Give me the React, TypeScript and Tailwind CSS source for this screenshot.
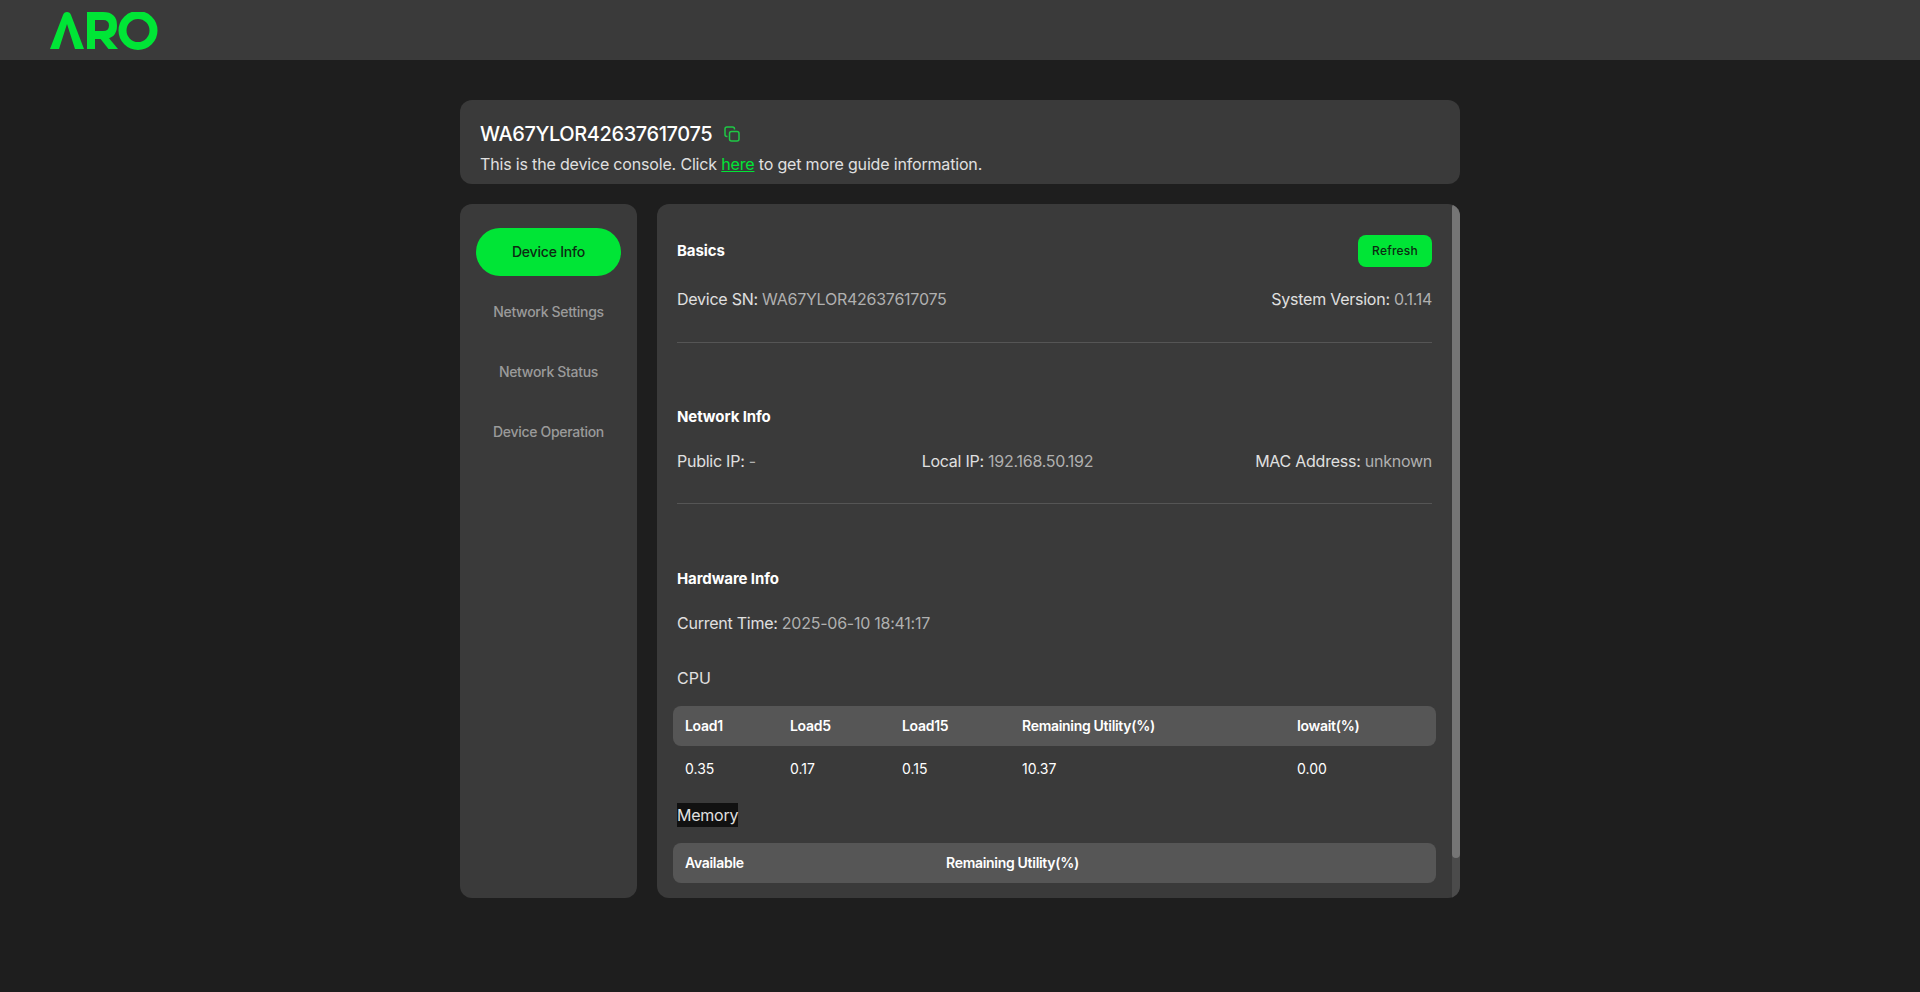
import React from 'react'

const font = { fontFamily: 'Inter, "Liberation Sans", sans-serif' }

const Logo = () => (
  <svg width="110" height="38" viewBox="0 0 110 38" fill="#00e536">
    <path d="M0 37 L13 3 Q14 0 17 0 Q20 0 21 3 L34 37 H25 L17 12 L9 37 Z" />
    <rect x="37" y="0" width="8" height="37" />
    <path d="M41 4 H53 Q63 4 63 13.5 Q63 23 53 23 H45" fill="none" stroke="#00e536" strokeWidth="8" />
    <path d="M49 25 H58 L68 37 H58.5 Z" />
    <circle cx="88" cy="18.5" r="15.5" fill="none" stroke="#00e536" strokeWidth="8" />
  </svg>
)

const CopyIcon = () => (
  <svg width="16" height="16" viewBox="0 0 16 16" fill="none" stroke="#1fc845" strokeWidth="1.5">
    <rect x="5.5" y="5.5" width="9.5" height="9.5" rx="2" />
    <path d="M3.5 10.5 H3 Q1 10.5 1 8.5 V3 Q1 1 3 1 H8.5 Q10.5 1 10.5 3 V3.5" />
  </svg>
)

const navItems = ['Device Info', 'Network Settings', 'Network Status', 'Device Operation']

const Field = ({ label, value }: { label: string; value: string }) => (
  <div className="text-[16px] leading-6 tracking-[-0.25px] text-[#e0e0e0]">
    {label}: <span className="text-[#b0b0b0]">{value}</span>
  </div>
)

const cpuCols = 'grid-cols-[105px_112px_120px_275px_1fr]'
const memCols = 'grid-cols-[261px_1fr]'

export default function App() {
  return (
    <div className="min-h-screen bg-[#1e1e1e]" style={font}>
      <header className="h-[60px] bg-[#3a3a3a] pl-[50px] pt-3">
        <Logo />
      </header>

      <main className="mx-auto mt-10 w-[1000px]">
        <section className="h-[84px] rounded-xl bg-[#3a3a3a] px-5 pt-5">
          <div className="flex items-center gap-3">
            <h1 className="text-[20px] leading-7 font-medium tracking-[-0.4px] text-white">WA67YLOR42637617075</h1>
            <CopyIcon />
          </div>
          <p className="mt-[4px] text-[16px] leading-6 tracking-[-0.17px] text-[#e0e0e0]">
            This is the device console. Click{' '}
            <a className="text-[#00e536] underline">here</a> to get more guide information.
          </p>
        </section>

        <div className="mt-5 flex h-[694px] gap-5">
          <nav className="flex w-[177px] flex-col gap-3 rounded-xl bg-[#3a3a3a] px-4 pt-6">
            {navItems.map((item, index) => (
              <div
                key={item}
                className={
                  index === 0
                    ? 'flex h-12 items-center justify-center rounded-full bg-[#00e536] pb-0.5 text-[14px] font-medium tracking-[-0.2px] text-[#0c2a12]'
                    : 'flex h-12 items-center justify-center pb-0.5 text-[14px] font-medium tracking-[-0.3px] text-[#9a9a9a]'
                }
              >
                {item}
              </div>
            ))}
          </nav>

          <div className="relative flex-1 overflow-hidden rounded-xl bg-[#3a3a3a]">
            <div className="w-[795px] px-5 pt-[31px]">
              <div className="flex h-8 items-center justify-between">
                <h2 className="text-[15px] font-bold tracking-[-0.1px] text-white">Basics</h2>
                <button className="h-8 w-[74px] rounded-lg bg-[#00e536] text-[12px] font-medium tracking-[0.2px] text-[#0c2a12]">
                  Refresh
                </button>
              </div>
              <div className="mt-5 flex justify-between">
                <Field label="Device SN" value="WA67YLOR42637617075" />
                <Field label="System Version" value="0.1.14" />
              </div>
              <div className="mt-[31px] h-px bg-[#555555]" />

              <h2 className="mt-[62px] text-[15px] leading-6 font-bold tracking-[-0.1px] text-white">Network Info</h2>
              <div className="mt-5 grid grid-cols-3 items-center">
                <Field label="Public IP" value="-" />
                <div className="-ml-[7px]">
                  <Field label="Local IP" value="192.168.50.192" />
                </div>
                <div className="justify-self-end">
                  <Field label="MAC Address" value="unknown" />
                </div>
              </div>
              <div className="mt-[30px] h-px bg-[#555555]" />

              <h2 className="mt-[63px] text-[15px] leading-6 font-bold tracking-[-0.1px] text-white">Hardware Info</h2>
              <div className="mt-5">
                <Field label="Current Time" value="2025-06-10 18:41:17" />
              </div>
              <div className="mt-[31px] text-[16px] leading-6 text-[#e0e0e0]">CPU</div>

              <div className={`-mx-1 mt-4 grid h-10 ${cpuCols} items-center rounded-lg bg-[#565656] px-3 pb-0.5 text-[14px] font-semibold tracking-[-0.3px] text-white`}>
                <div>Load1</div>
                <div>Load5</div>
                <div>Load15</div>
                <div>Remaining Utility(%)</div>
                <div>Iowait(%)</div>
              </div>
              <div className={`-mx-1 grid h-11 ${cpuCols} items-center px-3 text-[14px] text-white`}>
                <div>0.35</div>
                <div>0.17</div>
                <div>0.15</div>
                <div>10.37</div>
                <div>0.00</div>
              </div>

              <div className="mt-[13px] text-[16px] leading-6 tracking-[-0.25px] text-[#e0e0e0]">
                <span className="bg-[#111111] py-0.5">Memory</span>
              </div>
              <div className={`-mx-1 mt-4 grid h-10 ${memCols} items-center rounded-lg bg-[#565656] px-3 pb-0.5 text-[14px] font-semibold tracking-[-0.3px] text-white`}>
                <div>Available</div>
                <div>Remaining Utility(%)</div>
              </div>
            </div>

            {/* scrollbar */}
            <div className="absolute top-0 right-0 bottom-0 w-2 bg-[#4b4b4b]">
              <div className="h-[654px] rounded-full bg-[#757575]" />
            </div>
          </div>
        </div>
      </main>
    </div>
  )
}
